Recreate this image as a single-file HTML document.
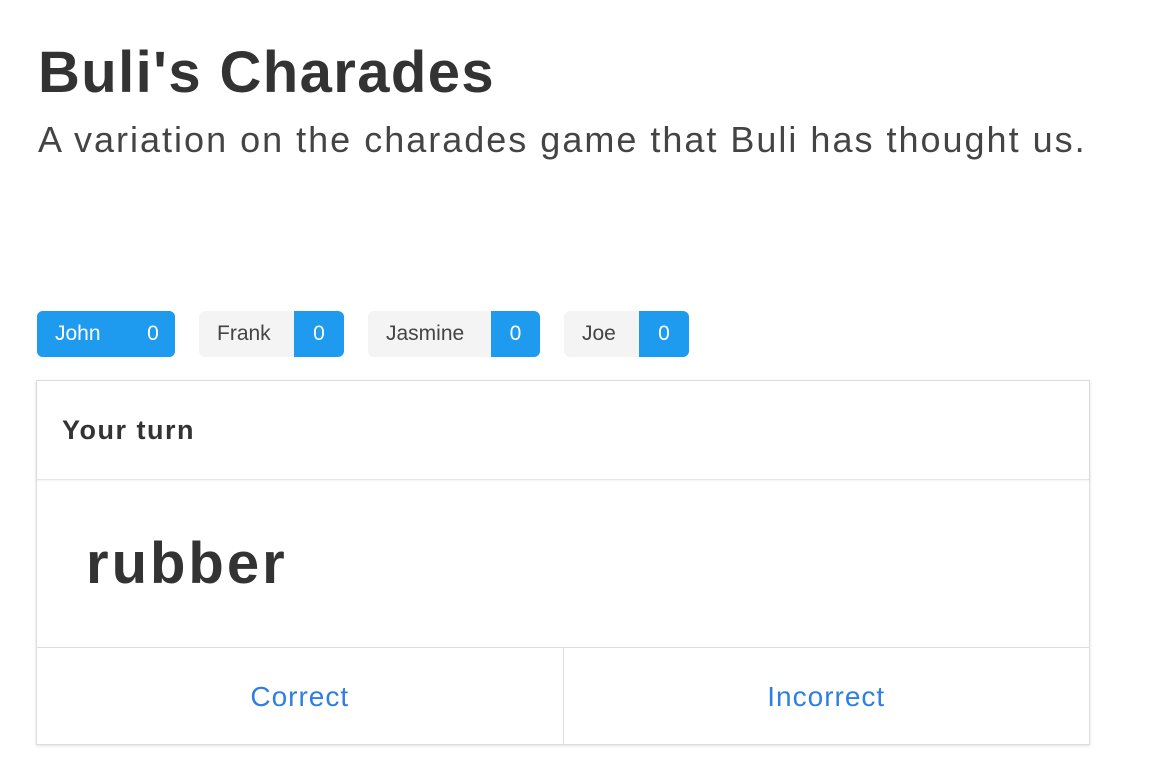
<!DOCTYPE html>
<html><head><meta charset="utf-8"><style>
*{box-sizing:border-box;margin:0;padding:0}
body{width:1156px;height:770px;background:#fff;font-family:"Liberation Sans",sans-serif;color:#333;position:relative;overflow:hidden}
h1{position:absolute;left:38px;top:38px;font-size:58px;font-weight:bold;color:#333;letter-spacing:1.4px;line-height:70px}
.sub{position:absolute;left:38px;top:118px;font-size:36px;color:#444;line-height:44px;white-space:nowrap;letter-spacing:2px}
.pill{position:absolute;top:311px;height:46px;border-radius:6px;overflow:hidden;display:flex;font-size:21px;line-height:46px}
.pill .n{background:#f4f4f4;color:#444;padding-left:18px}
.pill .s{background:#1e9bef;color:#fff;text-align:center}
.card{position:absolute;left:36px;top:380px;width:1054px;height:365px;border:1px solid #ddd;box-shadow:0 1px 3px rgba(0,0,0,.12)}
.hd{height:99px;border-bottom:1px solid #e4e4e4;box-shadow:0 1px 2px rgba(0,0,0,.05);font-weight:bold;font-size:27px;padding-left:25px;line-height:99px;color:#333;letter-spacing:1.5px}
.word{height:168px;border-bottom:1px solid #ddd;font-size:58px;font-weight:bold;padding-left:49px;line-height:168px;color:#333;letter-spacing:3px}
.btns{display:flex;height:97px}
.btns div{flex:1;text-align:center;line-height:97px;color:#2f7fe0;font-size:28px;letter-spacing:1px}
.btns div:first-child{border-right:1px solid #ddd}
</style></head><body>
<h1>Buli's Charades</h1>
<div class="sub">A variation on the charades game that Buli has thought us.</div>
<div class="pill" style="left:37px;width:138px;background:#1e9bef"><span class="n" style="background:#1e9bef;color:#fff;width:94px">John</span><span class="s" style="width:44px">0</span></div>
<div class="pill" style="left:199px;width:145px"><span class="n" style="width:95px">Frank</span><span class="s" style="width:50px">0</span></div>
<div class="pill" style="left:368px;width:172px"><span class="n" style="width:123px">Jasmine</span><span class="s" style="width:49px">0</span></div>
<div class="pill" style="left:564px;width:125px"><span class="n" style="width:75px">Joe</span><span class="s" style="width:50px">0</span></div>
<div class="card">
<div class="hd">Your turn</div>
<div class="word">rubber</div>
<div class="btns"><div>Correct</div><div>Incorrect</div></div>
</div>
</body></html>
